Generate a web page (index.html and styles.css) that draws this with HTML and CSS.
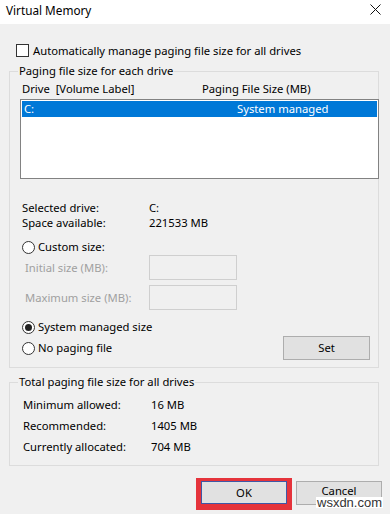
FILE: index.html
```html
<!DOCTYPE html>
<html>
<head>
<meta charset="utf-8">
<link rel="stylesheet" href="styles.css">
</head>
<body>
<div class="window">
  <div class="titlebar">
    <span class="title">Virtual Memory</span>
    <svg class="close" width="11" height="11" viewBox="0 0 11 11"><path d="M0.5 0.5 L10.5 10.5 M10.5 0.5 L0.5 10.5" stroke="#111" stroke-width="1" fill="none"/></svg>
  </div>

  <div class="auto">
    <span class="check"></span>
    <span>Automatically manage paging file size for all drives</span>
  </div>

  <fieldset class="group g1">
    <legend>Paging file size for each drive</legend>
    <div class="cols head">
      <span>Drive&nbsp;&nbsp;[Volume Label]</span>
      <span>Paging File Size (MB)</span>
    </div>
    <div class="listbox">
      <div class="cols sel">
        <span>C:</span>
        <span>System managed</span>
      </div>
    </div>
    <div class="info">
      <div class="kv"><span>Selected drive:</span><span>C:</span></div>
      <div class="kv"><span>Space available:</span><span>221533 MB</span></div>
    </div>
    <div class="radio-row custom"><span class="radio"></span><span>Custom size:</span></div>
    <div class="field first"><span class="dis">Initial size (MB):</span><span class="input"></span></div>
    <div class="field second"><span class="dis">Maximum size (MB):</span><span class="input"></span></div>
    <div class="radio-row sysman"><span class="radio on"></span><span>System managed size</span></div>
    <div class="setrow">
      <div class="radio-row"><span class="radio"></span><span>No paging file</span></div>
      <div class="btn set">Set</div>
    </div>
  </fieldset>

  <fieldset class="group g2">
    <legend>Total paging file size for all drives</legend>
    <div class="totals">
      <div class="kv2"><span>Minimum allowed:</span><span>16 MB</span></div>
      <div class="kv2"><span>Recommended:</span><span>1405 MB</span></div>
      <div class="kv2"><span>Currently allocated:</span><span>704 MB</span></div>
    </div>
  </fieldset>

  <div class="buttons">
    <div class="highlight"><div class="btn ok">OK</div></div>
    <div class="btn cancel"><span class="cancel-text">Cancel</span></div>
  </div>

  <div class="watermark">wsxdn.com</div>
</div>
</body>
</html>
```

FILE: styles.css
```css
html, body {
  margin: 0;
  padding: 0;
}
body {
  width: 390px;
  height: 514px;
  overflow: hidden;
  background: #f0f0f0;
  font-family: "Noto Sans", "Open Sans", sans-serif;
  font-size: 11.25px;
  color: #000;
}
.window {
  position: relative;
  width: 390px;
  height: 514px;
}
.titlebar {
  height: 24px;
  background: #fff;
  display: flex;
  justify-content: space-between;
  align-items: flex-start;
  padding: 0 9px 0 6px;
  box-sizing: border-box;
}
.title {
  line-height: 20px;
  font-size: 11.75px;
}
.close {
  margin-top: 4px;
}
.auto {
  display: flex;
  align-items: center;
  height: 13px;
  margin-top: 20px;
  padding-left: 16px;
  gap: 4px;
  line-height: 14px;
}
.check {
  width: 13px;
  height: 13px;
  box-sizing: border-box;
  border: 1px solid #333;
  background: #fff;
  flex: none;
}
.group {
  margin: 0 0 0 9px;
  width: 370px;
  box-sizing: border-box;
  border: 1px solid #dcdcdc;
  padding: 0;
  min-width: 0;
}
.group legend {
  margin-left: 8px;
  padding: 0 1px;
  line-height: 14px;
}
.g1 {
  margin-top: 7px;
  padding-bottom: 7px;
}
.g2 {
  margin-top: 7px;
  padding-bottom: 8px;
}
.cols {
  display: grid;
  grid-template-columns: 180px 1fr;
}
.head {
  padding: 4px 0 0 12px;
  line-height: 14px;
}
.listbox {
  margin: 3px -1px 0 10px;
  height: 80px;
  box-sizing: border-box;
  border: 1px solid #828282;
  background: #fff;
  padding: 1px;
}
.sel {
  grid-template-columns: 213px 1fr;
  height: 16px;
  line-height: 16px;
  background: #0078d7;
  color: #fff;
  padding-left: 2px;
}
.info {
  margin-top: 21px;
  padding-left: 12px;
}
.kv {
  display: grid;
  grid-template-columns: 127px 1fr;
  line-height: 15px;
}
.radio-row {
  display: flex;
  align-items: center;
  gap: 3px;
  height: 16px;
  line-height: 16px;
}
.g1 > .radio-row {
  padding-left: 12px;
}
.custom {
  margin-top: 9px;
}
.radio {
  width: 13px;
  height: 13px;
  box-sizing: border-box;
  border: 1px solid #333;
  border-radius: 50%;
  background: #fff;
  flex: none;
  display: flex;
  align-items: center;
  justify-content: center;
}
.radio.on::after {
  content: "";
  width: 7px;
  height: 7px;
  border-radius: 50%;
  background: #222;
}
.field {
  display: grid;
  grid-template-columns: 124px 88px;
  align-items: center;
  height: 25px;
  padding-left: 15px;
}
.second {
  margin-top: 5px;
}
.dis {
  color: #a0a0a0;
}
.input {
  height: 25px;
  box-sizing: border-box;
  border: 1px solid #cfcfcf;
  background: #f0f0f0;
}
.sysman {
  margin-top: 9px;
}
.setrow {
  display: flex;
  justify-content: space-between;
  align-items: center;
  height: 24px;
  margin-top: 1px;
  padding: 0 8px 0 12px;
}
.btn {
  box-sizing: border-box;
  background: #e1e1e1;
  border: 1px solid #adadad;
  display: flex;
  align-items: center;
  justify-content: center;
  line-height: 14px;
}
.set {
  width: 87px;
  height: 24px;
}
.totals {
  padding: 5px 0 0 13px;
}
.kv2 {
  display: grid;
  grid-template-columns: 128px 1fr;
  line-height: 21px;
}
.buttons {
  display: flex;
  justify-content: flex-end;
  align-items: flex-start;
  gap: 4px;
  margin-top: 12px;
  padding-right: 8px;
}
.highlight {
  background: #e5333b;
  padding: 3px 5px 6px 5px;
}
.ok {
  width: 86px;
  height: 23px;
  border: 1px solid #3f57a6;
}
.cancel {
  width: 86px;
  height: 24px;
  margin-top: 3px;
  align-items: flex-start;
}
.cancel-text {
  margin-top: 2px;
  line-height: 13px;
}
.watermark {
  position: absolute;
  left: 316px;
  top: 497px;
  padding: 0 1px;
  background: #fff;
  font-family: "Liberation Sans", Arial, sans-serif;
  font-size: 13px;
  line-height: 11px;
  color: #333;
}
```
